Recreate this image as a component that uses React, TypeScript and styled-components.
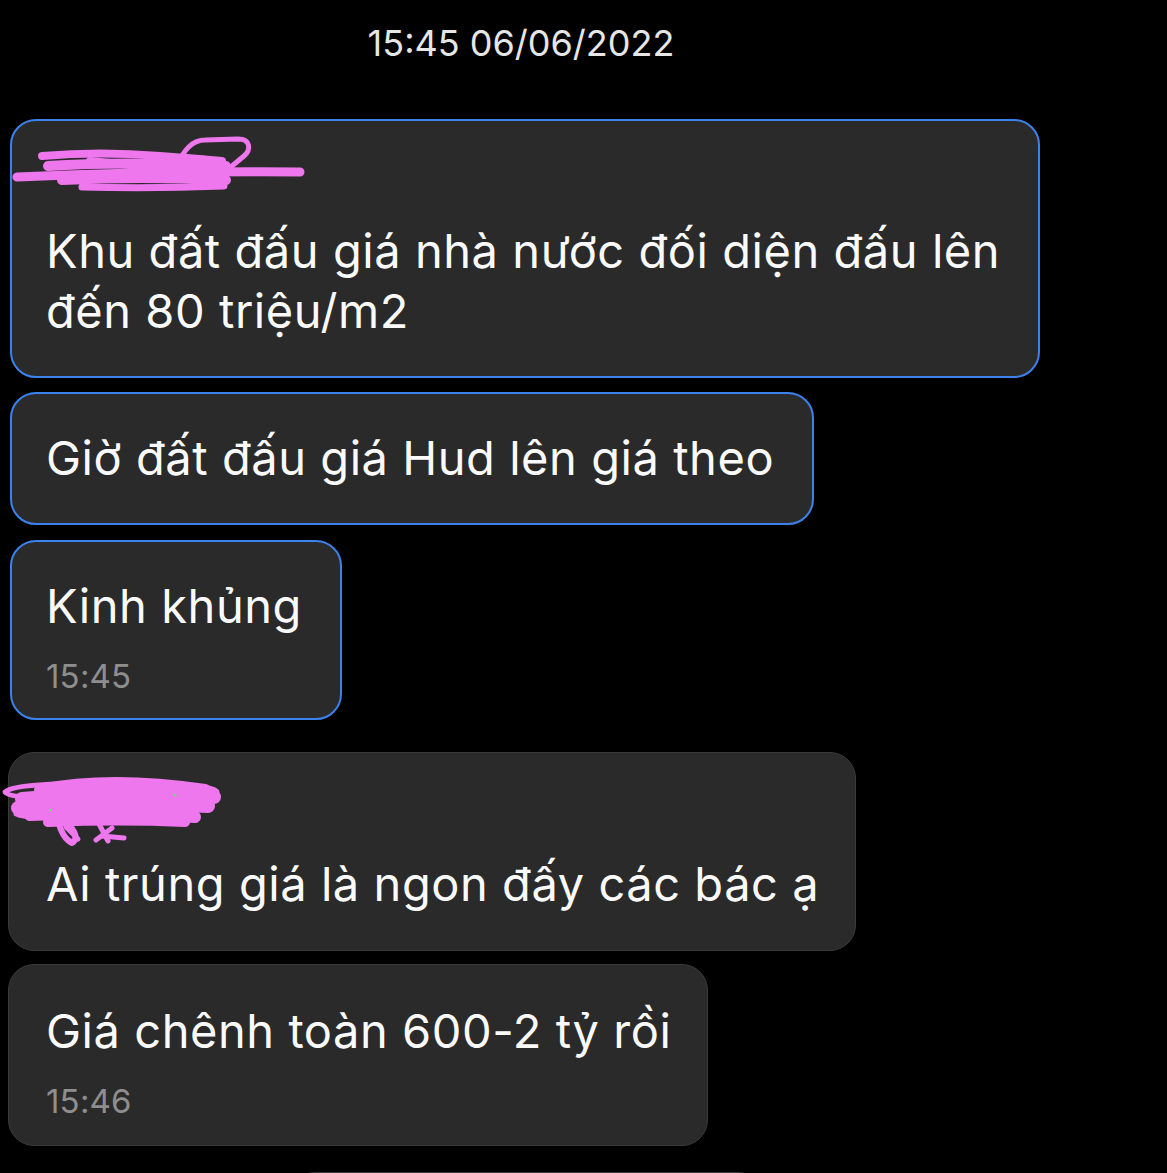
import React from 'react';
import styled, { createGlobalStyle } from 'styled-components';

const GlobalStyle = createGlobalStyle`
  html, body {
    margin: 0;
    padding: 0;
    background-color: #000;
    overflow: hidden;
  }
  body {
    font-family: Inter, 'Noto Sans', 'Liberation Sans', sans-serif;
    -webkit-font-smoothing: antialiased;
  }
`;

const Page = styled.div`
  width: 1167px;
  height: 1173px;
  background-color: #000;
  overflow: hidden;
`;

const Thread = styled.div`
  width: 1032px;
  padding-left: 10px;
  display: flex;
  flex-direction: column;
  align-items: flex-start;
`;

const DateHeader = styled.div`
  align-self: stretch;
  display: flex;
  justify-content: center;
  padding: 21px 10px 0 0;
  height: 44px;
  font-size: 36px;
  line-height: 44px;
  color: #e6e6e6;
`;

const Bubble = styled.div<{ $selected?: boolean; $gap: number; $hasTime?: boolean }>`
  position: relative;
  display: flex;
  flex-direction: column;
  margin-top: ${({ $gap }) => $gap}px;
  margin-left: ${({ $selected }) => ($selected ? '0' : '-2px')};
  background-color: #2a2a2a;
  border: ${({ $selected }) => ($selected ? '2px solid #3b82ec' : '1px solid #3a3a3a')};
  border-radius: 26px;
  padding: ${({ $selected, $hasTime }) =>
    $selected
      ? `34px 38px ${$hasTime ? 27 : 35}px 34px`
      : `${$hasTime ? 36 : 35}px 36px ${$hasTime ? 29 : 36}px 37px`};
`;

const NameRow = styled.div`
  height: 66px;
`;

const Scribble = styled.svg<{ $left: number; $top: number }>`
  position: absolute;
  left: ${({ $left }) => $left}px;
  top: ${({ $top }) => $top}px;
  overflow: visible;
  pointer-events: none;
`;

const Text = styled.div`
  font-size: 47px;
  line-height: 60px;
  color: #fafafa;
  white-space: nowrap;
  letter-spacing: 0.55px;
`;

const Time = styled.div`
  margin-top: 25px;
  font-size: 33px;
  line-height: 30px;
  color: #8e8e8e;
  letter-spacing: 0.2px;
`;

const Notice = styled.div`
  align-self: center;
  margin-top: 26px;
  width: 473px;
  height: 60px;
  background-color: #2a2a2a;
  border: 1px solid #3a3a3a;
  border-radius: 26px;
`;

const PINK = '#ee77ee';

const FirstName: React.FC = () => (
  <Scribble $left={-2} $top={9} width={300} height={65} viewBox="10 130 300 65">
    <g fill="none" stroke={PINK} strokeLinecap="round" strokeLinejoin="round">
      <path d="M17 177 Q 150 171 300 172" strokeWidth={9} />
      <path d="M42 156 Q 100 151 160 156 Q 200 159 222 161" strokeWidth={8} />
      <path d="M48 166 Q 120 161 226 166" strokeWidth={10} />
      <path d="M62 180 Q 140 176 226 180" strokeWidth={10} />
      <path d="M82 187 Q 150 189 224 186" strokeWidth={7} />
      <path d="M90 161 L 210 173" strokeWidth={8} />
      <path d="M178 162 C 185 150 192 140 205 140 L 238 139 C 251 139 251 150 244 156 L 232 166" strokeWidth={5} />
      <path d="M150 170 L 200 183" strokeWidth={5} />
    </g>
  </Scribble>
);

const SecondName: React.FC = () => (
  <Scribble $left={-9} $top={17} width={225} height={80} viewBox="0 770 225 80">
    <g fill="none" stroke={PINK} strokeLinecap="round" strokeLinejoin="round">
      <path d="M40 790 Q 110 776 205 790" strokeWidth={12} />
      <path d="M22 799 Q 110 791 214 797" strokeWidth={14} />
      <path d="M18 808 Q 110 800 208 806" strokeWidth={14} />
      <path d="M30 815 Q 100 811 195 817" strokeWidth={12} />
      <path d="M48 822 Q 120 819 185 822" strokeWidth={10} />
      <path d="M62 784 Q 12 785 5 792 Q 10 799 62 797" strokeWidth={5} />
      <path d="M52 807 Q 16 808 16 814 Q 24 819 62 816" strokeWidth={5} />
      <path d="M150 787 Q 214 784 217 792 Q 212 800 160 800" strokeWidth={5} />
      <path d="M58 820 Q 62 838 72 843 Q 80 838 70 826" strokeWidth={6} />
      <path d="M66 827 L 78 839" strokeWidth={5} />
      <path d="M98 822 L 108 841" strokeWidth={5} />
      <path d="M96 840 L 112 828" strokeWidth={5} />
      <path d="M102 836 L 124 838" strokeWidth={5} />
    </g>
    <circle cx={175} cy={795} r={1.5} fill="#6fe06f" />
    <circle cx={50} cy={810} r={1.2} fill="#6fe06f" />
  </Scribble>
);

const App: React.FC = () => (
  <Page>
    <GlobalStyle />
    <Thread>
      <DateHeader>15:45 06/06/2022</DateHeader>

      <Bubble $selected $gap={54}>
        <FirstName />
        <NameRow />
        <Text>
          Khu đất đấu giá nhà nước đối diện đấu lên
          <br />
          đến 80 triệu/m2
        </Text>
      </Bubble>

      <Bubble $selected $gap={14}>
        <Text>Giờ đất đấu giá Hud lên giá theo</Text>
      </Bubble>

      <Bubble $selected $hasTime $gap={15}>
        <Text>Kinh khủng</Text>
        <Time>15:45</Time>
      </Bubble>

      <Bubble $gap={32}>
        <SecondName />
        <NameRow />
        <Text>Ai trúng giá là ngon đấy các bác ạ</Text>
      </Bubble>

      <Bubble $hasTime $gap={13}>
        <Text>Giá chênh toàn 600-2 tỷ rồi</Text>
        <Time>15:46</Time>
      </Bubble>

      <Notice />
    </Thread>
  </Page>
);

export default App;
